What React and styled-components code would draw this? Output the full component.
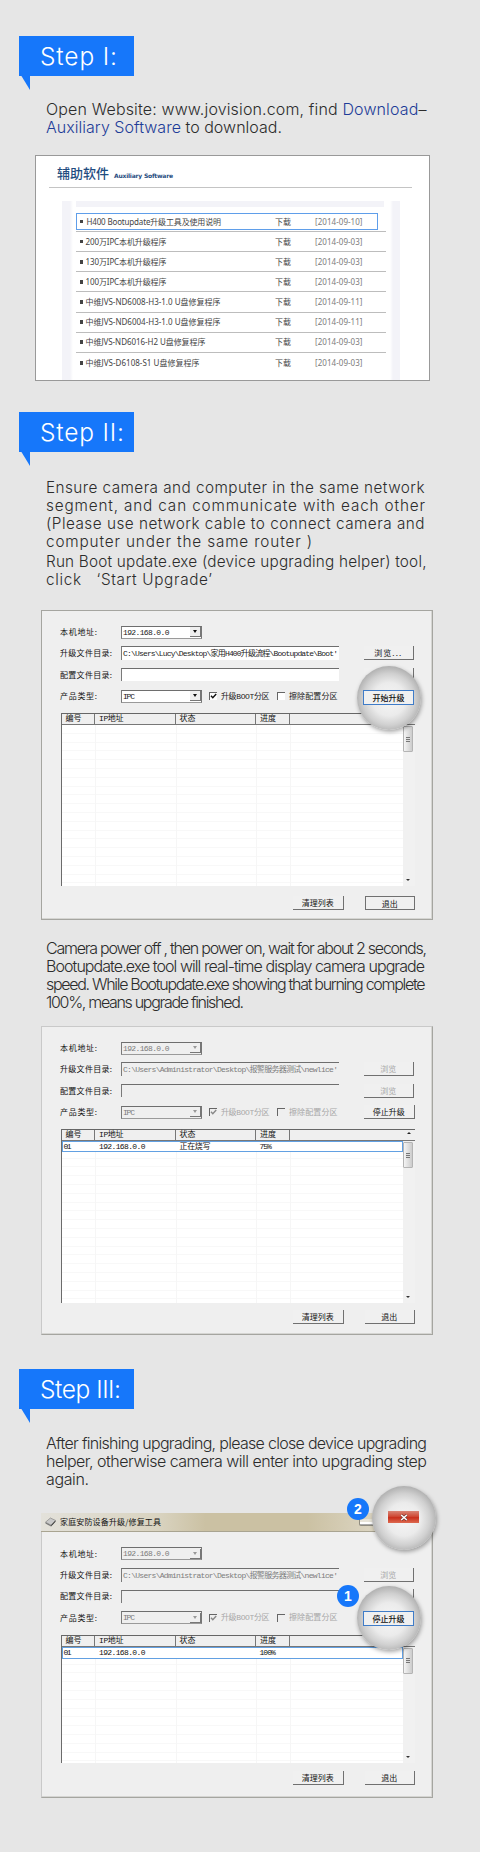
import React, { useLayoutEffect, useRef, useState } from "react";
import styled, { createGlobalStyle, css } from "styled-components";

const Global = createGlobalStyle`
  body { margin: 0; background: #e6e6e6; }
  * { box-sizing: border-box; }
`;

const Page = styled.main`
  width: 480px;
  height: 1852px;
  padding-top: 36px;
  background: #e6e6e6;
  font-family: "Liberation Sans", "Noto Sans CJK SC", sans-serif;
  overflow: hidden;
`;

/* Tracked text: letter spacing is worked out so the run fills a set width. */
const Run = styled.span`
  display: inline-block;
  flex: none;
  white-space: pre;
`;

function Fit({ w, children, ...rest }) {
  const ref = useRef(null);
  const [spacing, setSpacing] = useState(0);
  useLayoutEffect(() => {
    const natural = ref.current.getBoundingClientRect().width;
    const count = ref.current.textContent.length;
    setSpacing((w - natural) / Math.max(1, count - 1));
  }, [w]);
  return (
    <Run ref={ref} style={{ letterSpacing: `${spacing}px` }} {...rest}>
      {children}
    </Run>
  );
}

/* ---------- headings and copy ---------- */

const Banner = styled.h2`
  position: relative;
  width: 115px;
  height: 40px;
  margin: ${(p) => p.$top}px 0 0 19px;
  padding-left: 21px;
  background: #1677fa;
  color: #fff;
  font: 300 24.5px/40px Inter, "Liberation Sans", sans-serif;
  &::after {
    content: "";
    position: absolute;
    left: 0;
    top: 36px;
    width: 11px;
    height: 18px;
    background: #1677fa;
    clip-path: polygon(0 0, 100% 0, 100% 100%);
  }
`;

const Copy = styled.p`
  display: flex;
  flex-direction: column;
  align-items: flex-start;
  margin: ${(p) => p.$top}px 0 0 46px;
  color: #2c2c2c;
  font: 300 ${(p) => p.$size || 16}px/18px Inter, "Liberation Sans", sans-serif;
`;

const Link = styled.span`
  color: #1d3c98;
`;

/* ---------- download card ---------- */

const Card = styled.section`
  width: 395px;
  height: 226px;
  margin: 19px 0 0 35px;
  padding: 0 17px 0 13px;
  border: 1px solid #999;
  background: #fff;
`;

const CardHead = styled.header`
  display: flex;
  align-items: baseline;
  gap: 5px;
  height: 32px;
  padding: 7px 0 0 8px;
  border-bottom: 1px solid #c4c4c4;
  color: #1f4c80;
  font: 500 13px/20px "Noto Sans CJK SC", sans-serif;
`;

const SubHead = styled.span`
  font: 700 6px/8px "DejaVu Sans", sans-serif;
`;

const ListFrame = styled.div`
  width: 338px;
  height: 179px;
  margin: 13px 0 0 13px;
  padding: 0 14px;
  background: linear-gradient(90deg, #f3f3f8 8px, #fff 11px, #fff 328px, #f3f3f8 331px);
`;

const TopStrip = styled.div`
  height: 6px;
  background: #f3f3f8;
  margin-right: 2px;
`;

const FileRow = styled.article`
  position: relative;
  display: grid;
  grid-template-columns: 199px 40px 1fr;
  align-items: center;
  height: 20.12px;
  width: 310px;
  border-bottom: ${(p) => (p.$last ? 0 : 1)}px solid #bdbdbd;
  color: #444;
  font: 400 8px/12px "Noto Sans", "Noto Sans CJK SC", sans-serif;
  ${(p) =>
    p.$active &&
    css`
      &::after {
        content: "";
        position: absolute;
        inset: 1px 8px 1px 0;
        border: 1px solid #5f9eea;
      }
    `}
`;

const FileRows = styled.div`
  padding-top: 5px;
`;

const FileName = styled.span`
  display: flex;
  align-items: center;
  gap: ${(p) => (p.$active ? 3.5 : 2.5)}px;
  padding-left: 3.5px;
  &::before {
    content: "";
    width: 3.5px;
    height: 3.5px;
    background: #444;
  }
`;

const FileDate = styled.span`
  color: #7c7c7c;
`;

/* ---------- tool window ---------- */

const Window = styled.section`
  position: relative;
  width: 391.5px;
  height: ${(p) => p.$h}px;
  margin: ${(p) => p.$top}px 0 0 41px;
  border: 1px solid #a5a5a0;
  border-left-color: ${(p) => (p.$soft ? "#c9c9c9" : "#a5a5a0")};
  border-top-color: ${(p) => (p.$soft ? "#c9c9c9" : "#a5a5a0")};
  box-shadow: inset -1px -1px 0 #d5d5d2;
  background: #efefef;
  color: #111;
  font: 400 8px/12px "Noto Sans CJK SC", sans-serif;
`;

const TitleBar = styled.header`
  display: flex;
  align-items: center;
  gap: 4px;
  height: 19px;
  margin: -1px -1px 1px;
  padding-left: 4px;
  border-bottom: 1px solid #a9a491;
  background: linear-gradient(90deg, #e3e1da 0, #d9d3c0 30%, #cbc1a3 42%, #cbc1a3 68%, #dfd9c8 88%, #e6e4de);
`;

const Form = styled.div`
  padding: ${(p) => p.$top}px 0 0 18px;
`;

const FormRow = styled.div`
  display: flex;
  align-items: center;
  height: ${(p) => p.$h}px;
`;

const Label = styled.label`
  flex: none;
  width: 60.5px;
`;

const Field = styled.div`
  flex: none;
  display: flex;
  align-items: center;
  justify-content: space-between;
  width: ${(p) => p.$w}px;
  height: ${(p) => p.$h || 13}px;
  padding-left: 1.5px;
  border-top: 1px solid #6e6e6e;
  border-left: 1.5px solid #7a7a7a;
  background: ${(p) => (p.$off ? "#efefef" : "#fff")};
  color: ${(p) => (p.$off ? "#7c7c7c" : "#222")};
  font: 400 8px/11px "Liberation Mono", "Noto Sans CJK SC", monospace;
  ${(p) =>
    p.$combo &&
    css`
      border-right: 1px solid #777;
      border-bottom: 1px solid #9a9a9a;
    `}
`;

const Drop = styled.i`
  display: grid;
  place-items: center;
  width: 11px;
  height: 10px;
  border-right: 1px solid #777;
  border-bottom: 1px solid #777;
  background: #efefef;
  &::after {
    content: "";
    border: 2.5px solid transparent;
    border-top: 3px solid ${(p) => (p.$off ? "#999" : "#111")};
    border-bottom: 0;
  }
`;

const Check = styled.i`
  flex: none;
  width: 8px;
  height: 8px;
  margin-left: ${(p) => p.$gap}px;
  margin-right: 4px;
  border-top: 1px solid #666;
  border-left: 1px solid #666;
  background: ${(p) => (p.$off ? "#efefef" : "#fff")};
  svg { display: block; }
`;

const CheckText = styled.span`
  width: 49px;
  color: ${(p) => (p.$off ? "#a8a8a8" : "#222")};
  font: 400 8px/11px "Liberation Mono", "Noto Sans CJK SC", monospace;
`;

const Button = styled.button`
  display: grid;
  place-items: center;
  width: 50.5px;
  height: 14px;
  margin: 0 0 0 ${(p) => p.$gap || 0}px;
  padding: 0;
  border: 0 solid #707070;
  border-width: 0 1.5px 1.5px 0;
  background: #f0f0f0;
  color: ${(p) => (p.$off ? "#a8a8a8" : "#111")};
  font: 400 8px/11px "Noto Sans CJK SC", sans-serif;
  ${(p) => p.$framed && css`border-width: 1px 1.5px 1.5px 1px;`}
  ${(p) =>
    p.$focus &&
    css`
      height: 15px;
      border: ${p.$focus}px solid #3f7cc8;
      font-weight: 500;
    `}
`;

const Table = styled.div`
  width: 354px;
  margin: 7px 0 0 18.5px;
  border-left: 1.5px solid #6b6b6b;
`;

const TableHead = styled.div`
  display: grid;
  grid-template-columns: 33.5px 80.5px 80.5px 34px 1fr;
  height: 12px;
  border-top: 1.5px solid #666;
  border-bottom: 1px solid #777;
`;

const HeadCell = styled.span`
  padding-left: 4px;
  border-right: ${(p) => (p.$end ? 0 : 1)}px solid #777;
  font: 400 8px/10px "Liberation Mono", "Noto Sans CJK SC", monospace;
  text-align: ${(p) => (p.$end ? "right" : "left")};
`;

const UpArrow = styled.i`
  display: inline-block;
  margin: 0 4px 3px 0;
  border: 2px solid transparent;
  border-bottom: 2.5px solid #222;
  border-top: 0;
`;

const TableBody = styled.div`
  display: flex;
  height: ${(p) => p.$h}px;
  background: #fff;
`;

const Grid = styled.div`
  flex: 1;
  background:
    linear-gradient(#f6f6f6, #f6f6f6) 33px 0 / 1px 100% no-repeat,
    linear-gradient(#f6f6f6, #f6f6f6) 114px 0 / 1px 100% no-repeat,
    linear-gradient(#f6f6f6, #f6f6f6) 194px 0 / 1px 100% no-repeat,
    linear-gradient(#f6f6f6, #f6f6f6) 228px 0 / 1px 100% no-repeat,
    repeating-linear-gradient(#fff 0 7.8px, #f8f8f8 7.8px 8.8px);
`;

const DataRow = styled.div`
  display: grid;
  grid-template-columns: 35.5px 80.5px 80px 1fr;
  align-items: center;
  height: ${(p) => p.$h}px;
  padding-left: 1px;
  border: 1px solid #62a0e2;
  background: #fff;
  color: #111;
  font: 400 8px/9px "Liberation Mono", "Noto Sans CJK SC", monospace;
`;

const Track = styled.div`
  display: flex;
  flex-direction: column;
  align-items: center;
  justify-content: space-between;
  width: 12px;
  padding: 1px 1px 5px 0;
  background: #f1f1f1;
`;

const Thumb = styled.i`
  display: grid;
  place-items: center;
  width: 9.5px;
  height: 26px;
  border: 1px solid #b4b4b4;
  border-radius: 1px;
  background: linear-gradient(90deg, #f4f4f4, #ccc);
  &::after {
    content: "";
    width: 4px;
    height: 5px;
    background: repeating-linear-gradient(#777 0 1px, #ddd 1px 2px);
  }
`;

const DownArrow = styled.i`
  border: 2px solid transparent;
  border-top: 2.5px solid #333;
  border-bottom: 0;
`;

const Footer = styled.footer`
  display: flex;
  padding: ${(p) => p.$top}px 0 0 251px;
  gap: 21px;
`;

const Lens = styled.div`
  position: absolute;
  left: ${(p) => p.$x}px;
  top: ${(p) => p.$y}px;
  display: grid;
  place-items: center;
  width: 64px;
  height: 64px;
  border-radius: 50%;
  background: radial-gradient(circle at 50% 52%, #f6f6f6 0, #ebebeb 36%, #d0d0d0 56%, #b0b0b0 72%);
  box-shadow: 1px 2px 4px rgba(0, 0, 0, 0.35);
`;

const Badge = styled.b`
  position: absolute;
  left: ${(p) => p.$x}px;
  top: ${(p) => p.$y}px;
  width: 22px;
  height: 22px;
  border-radius: 50%;
  background: #1677fa;
  color: #fff;
  text-align: center;
  font: 700 14px/22px "Liberation Sans", sans-serif;
`;

const CloseButton = styled.span`
  display: grid;
  place-items: center;
  width: 31px;
  height: 12px;
  margin-top: -2px;
  background: linear-gradient(#d98575, #cf4a35 45%, #c9301c 55%, #dd6a50);
`;

const Minimise = styled.i`
  position: absolute;
  left: 317px;
  top: 5px;
  width: 18px;
  height: 7px;
  border: 1px solid #8f8c80;
  border-top: 0;
  border-radius: 0 0 2px 2px;
  background: linear-gradient(#e8e4d8 3px, #fff 3px 5px, #aaa 5px);
`;

const DeviceIcon = () => (
  <svg width="11" height="10" viewBox="0 0 11 10">
    <path d="M0.5 5.2 5.4 1 10.5 3.4 6 8.2z" fill="#c9c9c9" stroke="#666" strokeWidth=".5" />
    <path d="M0.5 5.2 6 8.2V9.6L0.5 6.6z" fill="#777" />
    <path d="M6 8.2 10.5 3.4V4.8L6 9.6z" fill="#333" />
  </svg>
);

const Tick = ({ color }) => (
  <svg width="7" height="7" viewBox="0 0 7 7">
    <path d="M1 2.8 2.8 4.8 6.2 1" fill="none" stroke={color} strokeWidth="1.4" />
  </svg>
);

const FILES = [
  ["H400 Bootupdate升级工具及使用说明", 134.5, "[2014-09-10]"],
  ["200万IPC本机升级程序", 81, "[2014-09-03]"],
  ["130万IPC本机升级程序", 81, "[2014-09-03]"],
  ["100万IPC本机升级程序", 81, "[2014-09-03]"],
  ["中维JVS-ND6008-H3-1.0 U盘修复程序", 135, "[2014-09-11]"],
  ["中维JVS-ND6004-H3-1.0 U盘修复程序", 135, "[2014-09-11]"],
  ["中维JVS-ND6016-H2 U盘修复程序", 120, "[2014-09-03]"],
  ["中维JVS-D6108-S1 U盘修复程序", 114, "[2014-09-03]"],
];

const ADMIN_PATH = "C:\\Users\\Administrator\\Desktop\\报警服务器测试\\newlice'";
const LUCY_PATH = "C:\\Users\\Lucy\\Desktop\\家用H400升级流程\\Bootupdate\\Boot'";

function ToolWindow({ top, h, off, title, path, row, rowH, bodyH, footTop, action, framed, soft, children }) {
  return (
    <Window $top={top} $h={h} $soft={soft}>
      {title && (
        <TitleBar>
          <DeviceIcon />
          <Fit w={101}>{title}</Fit>
          <Minimise />
        </TitleBar>
      )}
      <Form $top={10}>
        <FormRow $h={22}>
          <Label><Fit w={37}>本机地址:</Fit></Label>
          <Field $w={81} $off={off} $combo>
            <Fit w={46.5}>192.168.0.0</Fit>
            <Drop $off={off} />
          </Field>
        </FormRow>
        <FormRow $h={20}>
          <Label><Fit w={52}>升级文件目录:</Fit></Label>
          <Field $w={218} $h={14} $off={off}><Fit w={215}>{path}</Fit></Field>
          <Button $gap={25} $off={off}><Fit w={off ? 16 : 27}>{off ? "浏览" : "浏览..."}</Fit></Button>
        </FormRow>
        <FormRow $h={23}>
          <Label><Fit w={52}>配置文件目录:</Fit></Label>
          <Field $w={218} $off={off} />
          <Button $gap={25} $off={off}>{action && <Fit w={16}>浏览</Fit>}</Button>
        </FormRow>
        <FormRow $h={20}>
          <Label><Fit w={37}>产品类型:</Fit></Label>
          <Field $w={81} $off={off} $combo>
            <Fit w={12}>IPC</Fit>
            <Drop $off={off} />
          </Field>
          <Check $gap={7.5} $off={off}><Tick color={off ? "#888" : "#111"} /></Check>
          <CheckText $off={off}><Fit w={48.5}>升级BOOT分区</Fit></CheckText>
          <Check $gap={7} $off={off} />
          <CheckText $off={off}><Fit w={48.5}>擦除配置分区</Fit></CheckText>
          {action && <Button $gap={26}><Fit w={32}>{action}</Fit></Button>}
        </FormRow>
      </Form>
      <Table>
        <TableHead>
          <HeadCell><Fit w={16}>编号</Fit></HeadCell>
          <HeadCell><Fit w={24.5}>IP地址</Fit></HeadCell>
          <HeadCell><Fit w={16}>状态</Fit></HeadCell>
          <HeadCell><Fit w={16}>进度</Fit></HeadCell>
          <HeadCell $end>{off && <UpArrow />}</HeadCell>
        </TableHead>
        <TableBody $h={bodyH}>
          <Grid>
            {row && (
              <DataRow $h={rowH}>
                {row.map((cell, i) => (
                  <span key={i}>{cell && <Fit w={[8, 46.5, 31, cell.length * 4.1][i]}>{cell}</Fit>}</span>
                ))}
              </DataRow>
            )}
          </Grid>
          <Track><Thumb /><DownArrow /></Track>
        </TableBody>
      </Table>
      <Footer $top={footTop}>
        <Button><Fit w={32}>清理列表</Fit></Button>
        <Button $framed={framed}><Fit w={16}>退出</Fit></Button>
      </Footer>
      {children}
    </Window>
  );
}

export default function App() {
  return (
    <Page>
      <Global />
      <Banner $top={0}><Fit w={77}>Step I:</Fit></Banner>
      <Copy $top={24}>
        <Fit w={380.5}>Open Website: www.jovision.com, find <Link>Download</Link>–</Fit>
        <Fit w={236}><Link>Auxiliary Software</Link> to download.</Fit>
      </Copy>
      <Card>
        <CardHead>
          <Fit w={52}>辅助软件</Fit>
          <SubHead><Fit w={59}>Auxiliary Software</Fit></SubHead>
        </CardHead>
        <ListFrame>
          <TopStrip />
          <FileRows>
            {FILES.map(([name, w, date], i) => (
              <FileRow key={name} $active={i === 0} $last={i === FILES.length - 1}>
                <FileName $active={i === 0}><Fit w={w}>{name}</Fit></FileName>
                <span><Fit w={16}>下载</Fit></span>
                <FileDate><Fit w={47.5}>{date}</Fit></FileDate>
              </FileRow>
            ))}
          </FileRows>
        </ListFrame>
      </Card>

      <Banner $top={31}><Fit w={84}>Step II:</Fit></Banner>
      <Copy $top={27} $size={15.3}>
        <Fit w={378.5}>Ensure camera and computer in the same network</Fit>
        <Fit w={379}>segment, and can communicate with each other</Fit>
        <Fit w={378.5}>(Please use network cable to connect camera and</Fit>
        <Fit w={266}>computer under the same router )</Fit>
      </Copy>
      <Copy $top={2} $size={15.3}>
        <Fit w={380.5}>Run Boot update.exe (device upgrading helper) tool,</Fit>
        <Fit w={166}>click   ‘Start Upgrade’</Fit>
      </Copy>

      <ToolWindow top={21} h={310} path={LUCY_PATH} bodyH={161} footTop={10} framed>
        <Lens $x={314.5} $y={54.5}>
          <Button $focus={1.5}><Fit w={32}>开始升级</Fit></Button>
        </Lens>
      </ToolWindow>

      <Copy $top={19}>
        <Fit w={381}>Camera power off , then power on, wait for about 2 seconds,</Fit>
        <Fit w={379}>Bootupdate.exe tool will real-time display camera upgrade</Fit>
        <Fit w={379.5}>speed. While Bootupdate.exe showing that burning complete</Fit>
        <Fit w={198}>100%, means upgrade finished.</Fit>
      </Copy>

      <ToolWindow
        top={15} h={308.5} off soft path={ADMIN_PATH} bodyH={162} footTop={6.5}
        action="停止升级" row={["01", "192.168.0.0", "正在烧写", "75%"]} rowH={11}
      />

      <Banner $top={34.5}><Fit w={81}>Step III:</Fit></Banner>
      <Copy $top={24.5}>
        <Fit w={381}>After finishing upgrading, please close device upgrading</Fit>
        <Fit w={381}>helper, otherwise camera will enter into upgrading step</Fit>
        <Fit w={43}>again.</Fit>
      </Copy>

      <ToolWindow
        top={25} h={285} off soft title="家庭安防设备升级/修复工具" path={ADMIN_PATH} bodyH={116.5} footTop={8}
        row={["01", "192.168.0.0", "", "100%"]} rowH={12.5}
      >
        <Lens $x={314.5} $y={72.5}>
          <Button $focus={1}><Fit w={32}>停止升级</Fit></Button>
        </Lens>
        <Lens $x={329.5} $y={-27.5}>
          <CloseButton>
            <svg width="8" height="7" viewBox="0 0 8 7">
              <path d="M1.2 1 6.8 6M6.8 1 1.2 6" stroke="#6b3a35" strokeWidth="2.6" />
              <path d="M1.2 1 6.8 6M6.8 1 1.2 6" stroke="#fff" strokeWidth="1.5" />
            </svg>
          </CloseButton>
        </Lens>
        <Badge $x={305} $y={-16}>2</Badge>
        <Badge $x={295} $y={71}>1</Badge>
      </ToolWindow>
    </Page>
  );
}
